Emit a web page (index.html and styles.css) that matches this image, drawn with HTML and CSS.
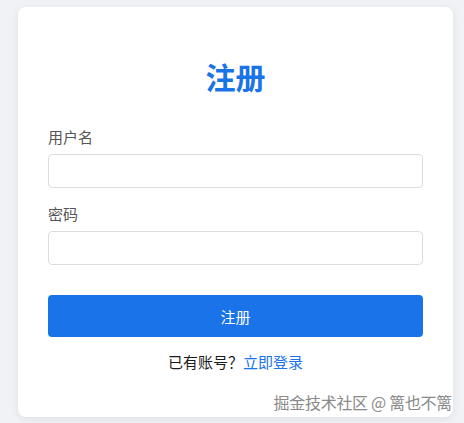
FILE: index.html
```html
<!DOCTYPE html>
<html lang="zh-CN">
<head>
<meta charset="utf-8">
<title>注册</title>
<link rel="stylesheet" href="styles.css">
</head>
<body>
<div class="page">
  <div class="card">
    <h2 class="title">注册</h2>
    <div class="field">
      <label class="label">用户名</label>
      <input class="input" type="text">
    </div>
    <div class="field">
      <label class="label">密码</label>
      <input class="input" type="password">
    </div>
    <button class="btn">注册</button>
    <p class="switch">已有账号？<a class="link" href="#">立即登录</a></p>
  </div>
</div>
<div class="watermark">掘金技术社区 @ 篱也不篱</div>
</body>
</html>
```

FILE: styles.css
```css
* { box-sizing: border-box; }
html, body { margin: 0; padding: 0; }
body {
  background: #f0f2f5;
  font-family: "Noto Sans CJK SC", "Microsoft YaHei", "Noto Sans", sans-serif;
  width: 464px;
  height: 423px;
  overflow: hidden;
  position: relative;
}
.page {
  padding: 7px 0 0 18px;
}
.card {
  width: 435px;
  height: 410px;
  background: #fff;
  border-radius: 8px;
  box-shadow: 0 2px 8px rgba(0, 0, 0, 0.08);
  padding: 40px 30px 30px;
  display: flex;
  flex-direction: column;
}
.title {
  margin: 9px 0 31px;
  font-size: 30px;
  line-height: 40px;
  font-weight: 700;
  color: #1a73e8;
  text-align: center;
}
.field {
  display: flex;
  flex-direction: column;
  gap: 7px;
  margin-bottom: 16px;
}
.field:nth-of-type(2) { margin-bottom: 0; }
.label {
  font-size: 15px;
  line-height: 20px;
  color: #555;
}
.input {
  height: 34px;
  border: 1px solid #ddd;
  border-radius: 4px;
  background: #fff;
  padding: 0 10px;
  font-size: 14px;
  outline: none;
}
.btn {
  margin-top: 30px;
  height: 42px;
  border: none;
  border-radius: 4px;
  background: #1a73e8;
  color: #fff;
  font-family: inherit;
  font-size: 15px;
  cursor: pointer;
}
.switch {
  margin: 15px 0 0;
  font-size: 15px;
  line-height: 20px;
  color: #1a1a1a;
  text-align: center;
}
.link {
  color: #1a73e8;
  text-decoration: none;
}
.watermark {
  position: absolute;
  right: 12px;
  top: 392px;
  font-size: 16px;
  line-height: 20px;
  letter-spacing: -0.3px;
  color: #8a8a8a;
  text-shadow: 0 0 2px #fff, 0 0 1px #fff;
  white-space: nowrap;
}
```
